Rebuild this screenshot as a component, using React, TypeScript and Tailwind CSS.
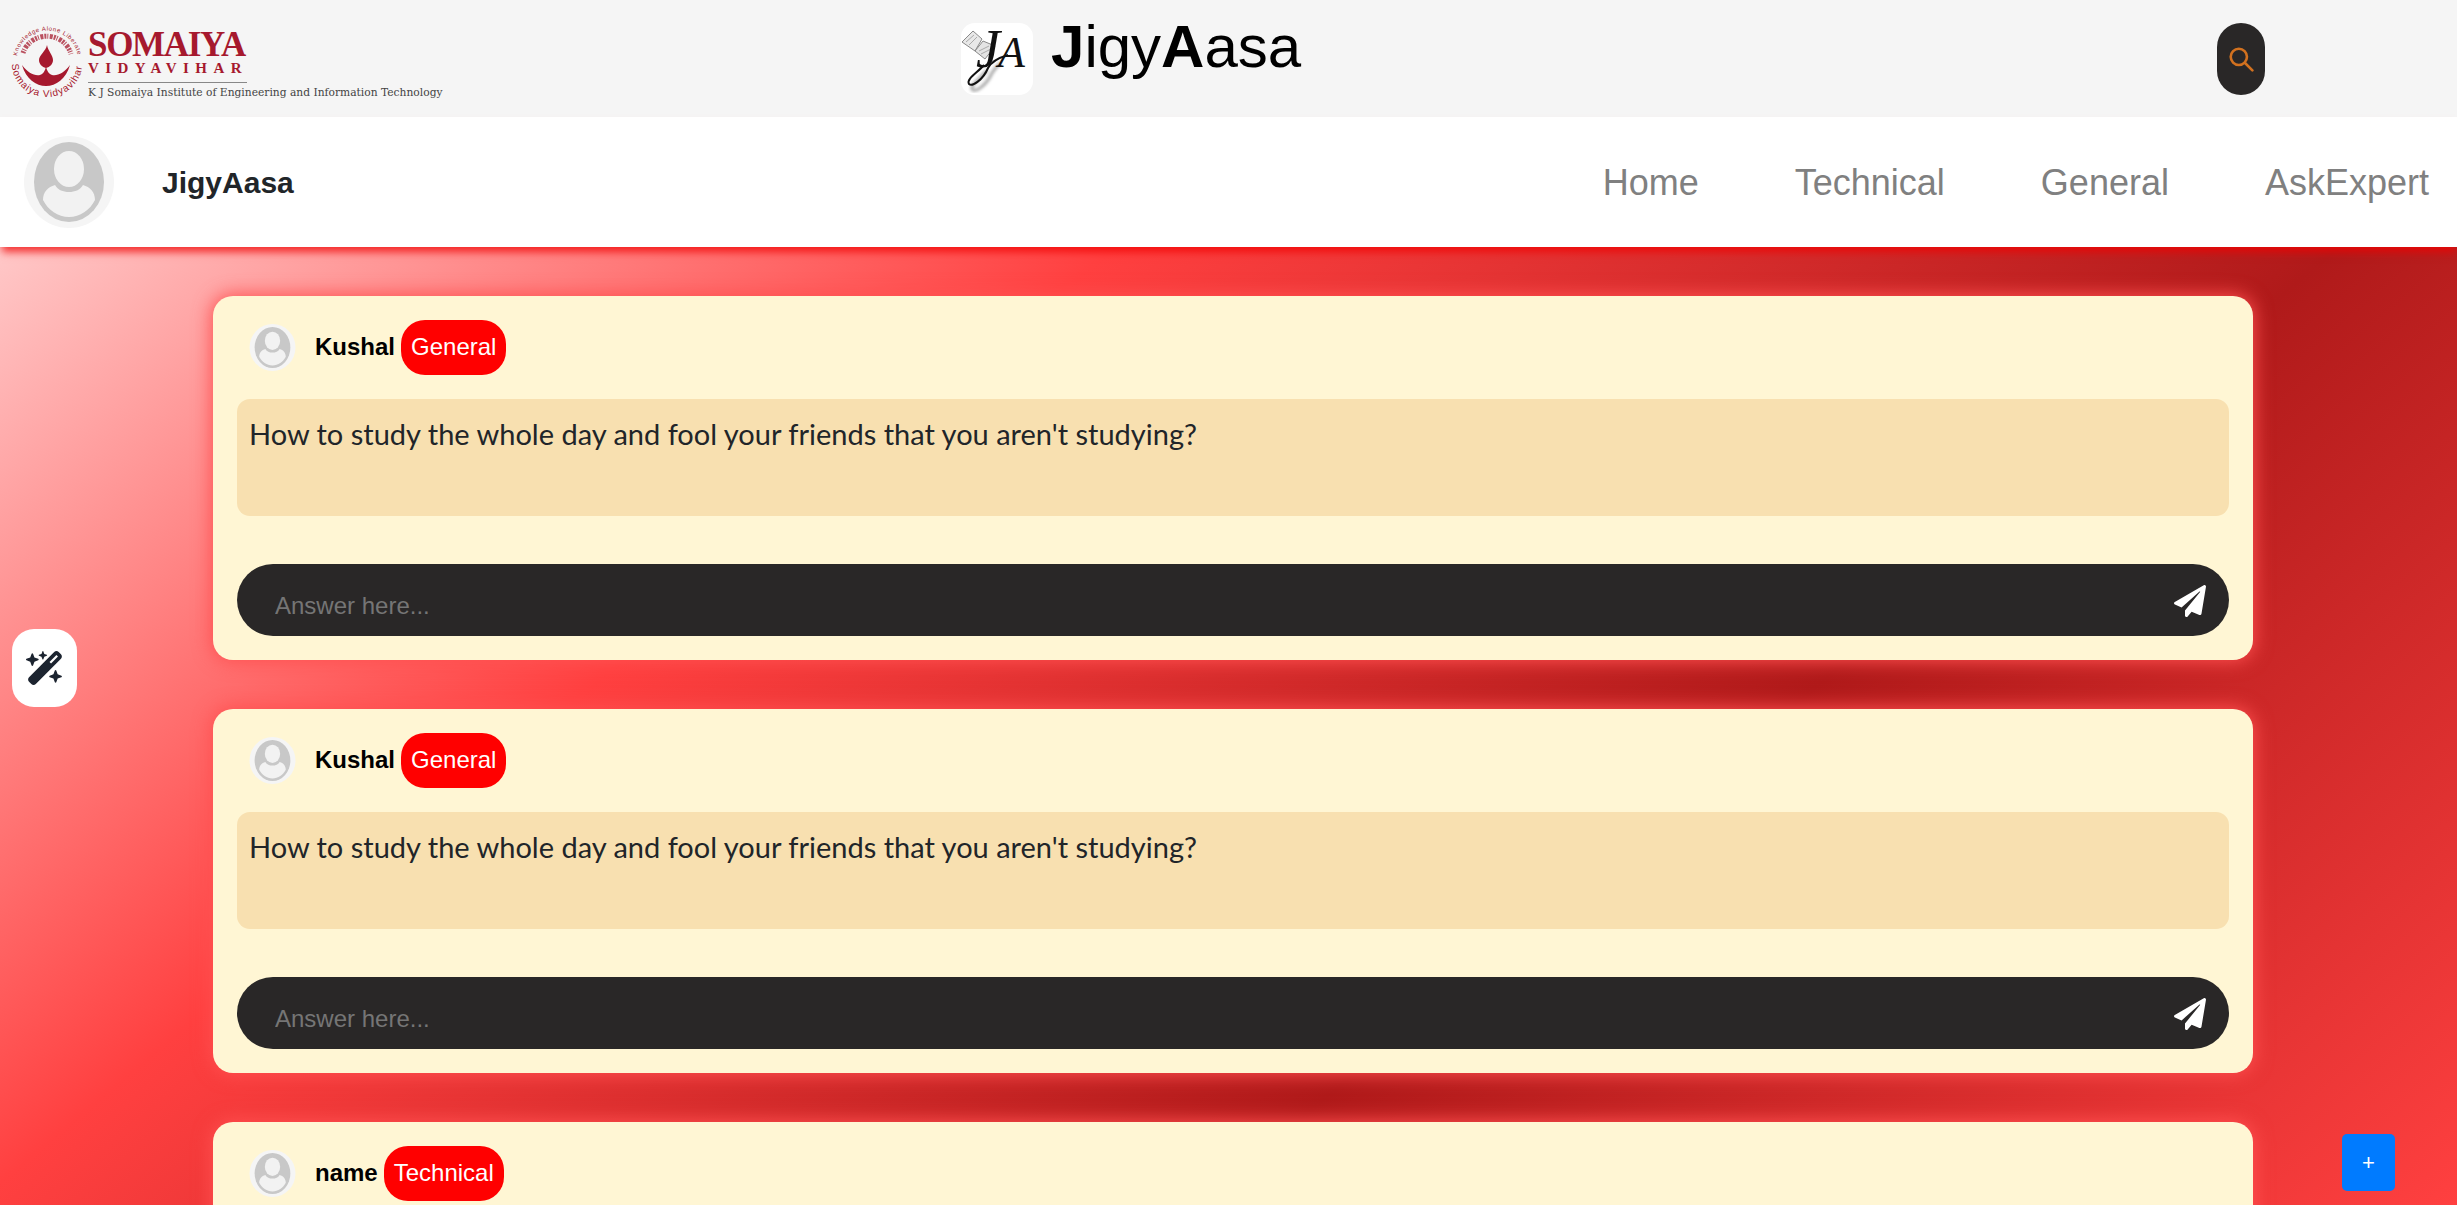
import { FaPaperPlane } from 'react-icons/fa';
import { FaWandMagicSparkles } from 'react-icons/fa6';

const question = "How to study the whole day and fool your friends that you aren't studying?";

const posts = [
  { name: 'Kushal', tag: 'General', text: question },
  { name: 'Kushal', tag: 'General', text: question },
  { name: 'name', tag: 'Technical', text: question },
];

function Avatar({ className }: { className: string }) {
  return (
    <svg viewBox="0 0 90 92" className={className}>
      <ellipse cx="45" cy="46" rx="45" ry="46" fill="#f5f5f5" />
      <ellipse cx="45" cy="46" rx="35" ry="40" fill="#c8c8c8" />
      <ellipse cx="45" cy="33" rx="15" ry="18" fill="#f2f2f2" />
      <path d="M19 64c0-8 5-13 12-15 3 5 8 7 14 7s11-2 14-7c7 2 12 7 12 15-5 10-15 17-26 17s-21-7-26-17z" fill="#f2f2f2" />
    </svg>
  );
}

function SomaiyaLogo() {
  return (
    <div className="mt-[12px] flex items-center gap-[4px]">
      <svg viewBox="0 0 72 72" className="h-[72px] w-[72px] overflow-visible">
        <defs>
          <path id="ring-top" d="M5 27A31 31 0 0 1 66 27" />
          <path id="ring-bottom" d="M0 35A35 33 0 0 0 70 35" />
        </defs>
        <text fontSize="6" fill="#a6192e" fontFamily="Liberation Sans, sans-serif">
          <textPath href="#ring-top" textLength="88">Knowledge Alone Liberates</textPath>
        </text>
        <text fontSize="10" fill="#a6192e" fontFamily="Liberation Sans, sans-serif">
          <textPath href="#ring-bottom" textLength="104">Somaiya Vidyavihar</textPath>
        </text>
        {/* devanagari motto ring, too small to read at this size */}
        <path d="M11 24A25 24 0 0 1 59 25" fill="none" stroke="#a6192e" strokeWidth="5" strokeDasharray="2 1 1 1.5 3 1" opacity="0.75" />
        <path d="M35 16c1 6 6 10 6 15 0 4-3 7-7 8-4-1-7-4-7-8 0-5 7-9 8-15z" fill="#a6192e" />
        <path d="M10 36c4 14 14 21 24 21s20-7 24-21c-6 8-12 11-18 10-3-1-5-4-6-8-1 4-3 7-6 8-6 1-12-2-18-10z" fill="#a6192e" />
      </svg>
      <div className="w-[356px] font-['Liberation_Serif',serif]">
        <div className="text-[35px] leading-[30px] font-bold tracking-[-1.3px] text-[#a6192e]">SOMAIYA</div>
        <div className="mt-[2px] w-[159px] border-b border-[#888] pb-[7px] text-[15px] leading-[13px] font-bold tracking-[6.4px] whitespace-nowrap text-[#a6192e]">VIDYAVIHAR</div>
        <div className="mt-[3px] font-['DejaVu_Serif',serif] text-[10.7px] leading-[14px] whitespace-nowrap text-[#444]">K J Somaiya Institute of Engineering and Information Technology</div>
      </div>
    </div>
  );
}

function JaLogo() {
  return (
    <svg viewBox="0 0 72 72" className="h-[72px] w-[72px]">
      <defs>
        <filter id="soft">
          <feGaussianBlur stdDeviation="1.6" />
        </filter>
      </defs>
      <rect width="72" height="72" rx="14" fill="#fff" />
      <path d="M1 19L12 8l9 8-7 12z" fill="#e8e8e8" stroke="#888" />
      <path d="M14 28l8-10 12 5-10 13z" fill="#e4e4e4" stroke="#888" />
      <path d="M5 19l8-7M8 22l8-8M18 28l10-5M20 31l10-5" stroke="#aaa" fill="none" />
      <g filter="url(#soft)" opacity="0.55" transform="translate(4 5)">
        <path d="M22 42C16 50 5 57 7 61c3 4 14-3 20-16 3-5 6-8 9-10" fill="none" stroke="#666" strokeWidth="3" />
      </g>
      <path d="M23 42C16 50 5 56 8 61c3 3 14-4 19-16 3-6 10-10 20-13" fill="none" stroke="#111" strokeWidth="2" />
      <text x="15" y="44" fontSize="54" fontStyle="italic" fill="#111" fontFamily="Liberation Serif, serif">J</text>
      <text x="37" y="44" fontSize="44" fontStyle="italic" fill="#111" fontFamily="Liberation Serif, serif">A</text>
    </svg>
  );
}

function PostCard({ name, tag, text }: { name: string; tag: string; text: string }) {
  return (
    <article className="w-[2040px] shrink-0 rounded-[20px] bg-[#fff6d4] p-[24px] shadow-[0_0_18px_2px_rgba(255,80,80,0.95)]">
      <div className="flex h-[55px] items-center">
        <Avatar className="ml-[12px] h-[47px] w-[47px]" />
        <span className="ml-[19px] -translate-y-px text-[24px] font-bold text-black">{name}</span>
        <span className="ml-[6px] flex h-[55px] items-center rounded-[24px] bg-[#f00] px-[10px] pb-[2px] text-[24px] text-white">{tag}</span>
      </div>
      <div className="mt-[24px] h-[117px] rounded-[13px] bg-[#f8e0b0] px-[12px] pt-[16px] font-['Lato',sans-serif] text-[29px] leading-[38px] text-[#212529]">
        {text}
      </div>
      <div className="mt-[48px] flex h-[72px] items-center rounded-full bg-[#292727] pr-[23px] pl-[38px]">
        <input placeholder="Answer here..." className="min-w-0 flex-1 bg-transparent pt-[12px] text-[24px] text-white outline-none placeholder:text-[#757575]" />
        <FaPaperPlane className="mt-[2px] h-[32px] w-[32px] text-white" />
      </div>
    </article>
  );
}

export default function App() {
  return (
    <div className="relative flex h-[1205px] flex-col overflow-hidden font-['Liberation_Sans',sans-serif]">
      <header className="flex h-[117px] shrink-0 items-center bg-[#f5f5f5] pl-[12px]">
        <SomaiyaLogo />
        <div className="ml-[517px] flex items-center gap-[18px]">
          <JaLogo />
          <h1 className="-mt-[24px] text-[60px] leading-[70px] text-black">
            <b>J</b>igy<b>A</b>asa
          </h1>
        </div>
        <button className="ml-[916px] flex h-[72px] w-[48px] items-center justify-center rounded-[24px] bg-[#292727]">
          <svg viewBox="0 0 24 24" className="h-[26px] w-[26px]" fill="none" stroke="#d2711f" strokeWidth="2.4" strokeLinecap="round">
            <circle cx="10" cy="10" r="7.5" />
            <path d="M15.5 15.5l7 7" />
          </svg>
        </button>
      </header>

      <nav className="z-10 flex h-[130px] shrink-0 items-center bg-white pr-[28px] pl-[24px] shadow-[0_7px_8px_-2px_rgba(240,0,0,0.75)]">
        <Avatar className="h-[92px] w-[90px]" />
        <span className="ml-[48px] text-[30px] font-bold text-[#212529]">JigyAasa</span>
        <div className="ml-auto flex gap-[96px] pt-[1px] text-[36px] text-[#808080]">
          <a>Home</a>
          <a>Technical</a>
          <a>General</a>
          <a>AskExpert</a>
        </div>
      </nav>

      <main className="flex min-h-0 flex-1 flex-col items-start gap-[49px] bg-[linear-gradient(140deg,#ffc8c8_0%,#ff4040_31%,#b01a1a_65%,#ff4040_100%)] pt-[49px] pl-[213px]">
        {posts.map((p, i) => (
          <PostCard key={i} {...p} />
        ))}
      </main>

      <button className="absolute top-[629px] left-[12px] flex h-[78px] w-[65px] items-center justify-center rounded-[22px] bg-white text-[#1c2430]">
        <FaWandMagicSparkles className="h-[38px] w-[38px]" />
      </button>
      <button className="absolute top-[1134px] left-[2342px] flex h-[57px] w-[53px] items-center justify-center rounded-[5px] bg-[#007bff] text-[22px] text-white">
        +
      </button>
    </div>
  );
}
